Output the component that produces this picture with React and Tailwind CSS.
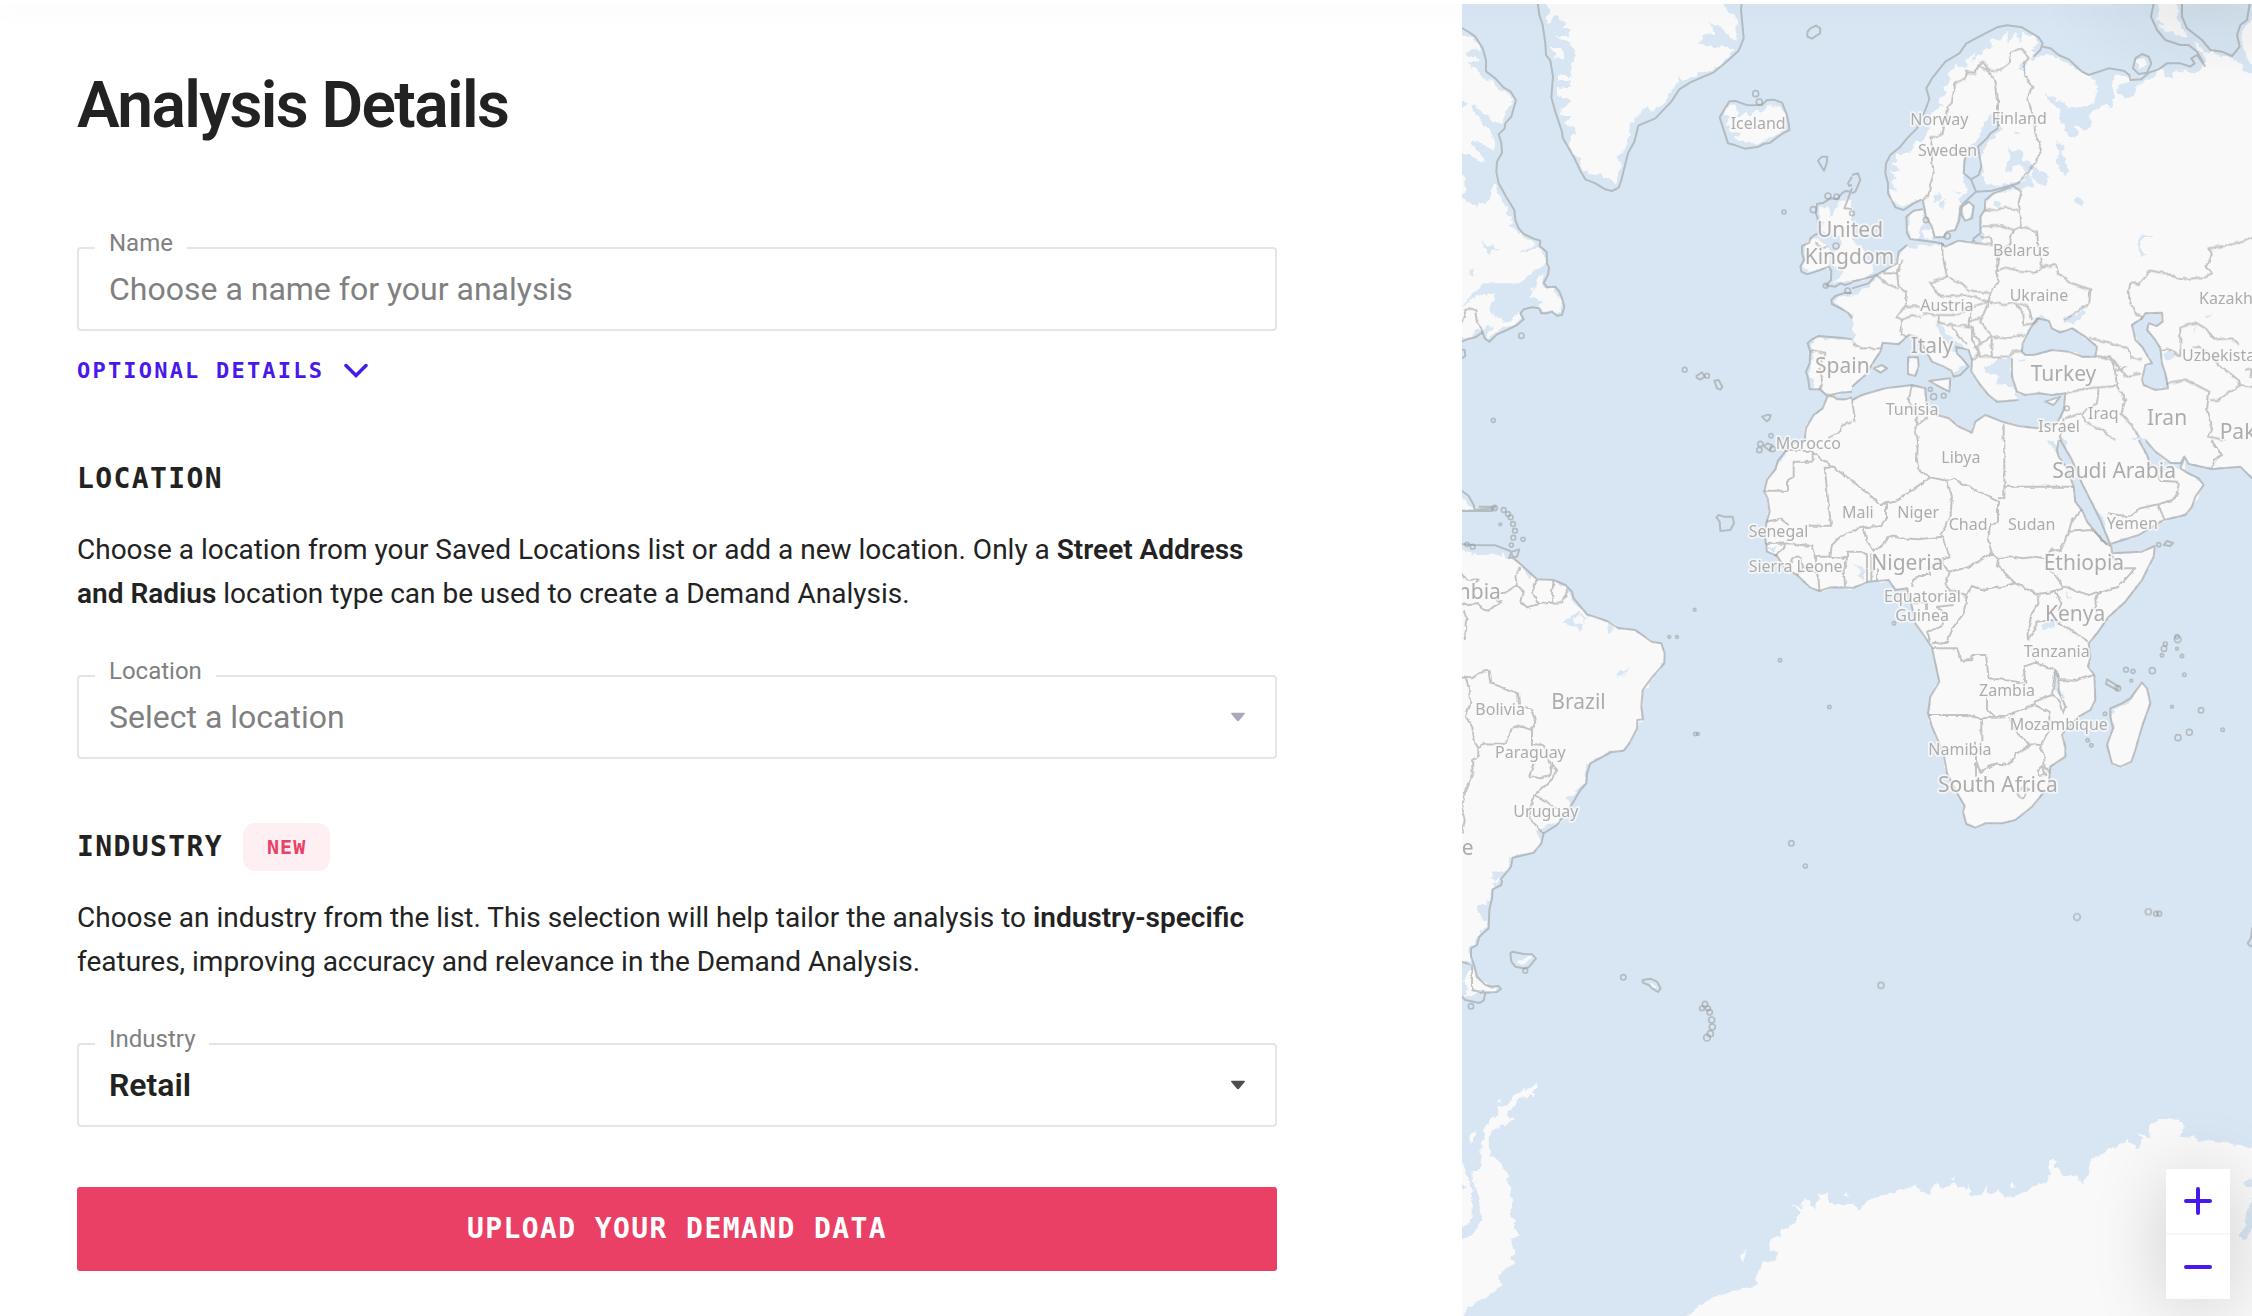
import React from "react";

const SANS = "font-[Roboto,'Liberation_Sans',sans-serif]";
const MONO = "font-['DejaVu_Sans_Mono','Liberation_Mono',monospace]";

const AFRICA_COAST =
  "M620 0L615 30L620 50L645 85L665 140L670 185L692 215L705 245L750 300L778 320L780 340L870 335L908 318L905 350L870 420L820 485L770 530L735 580L710 610L715 650L708 680L727 705L730 780L715 810L680 830L640 870L630 885L640 920L640 950L595 980L590 1040L540 1100L490 1140L450 1150L400 1150L370 1163L343 1152L333 1115L338 1098L310 1050L285 1000L275 940L240 860L228 820L235 770L262 725L250 670L240 622L215 585L190 550L180 500L165 445L130 450L110 420L50 425L0 445";

// Each tile covers 1200 x 1320 map units; "dx"/"dy" place it on the sheet.
const TILES = [
  {
    id: "north-atlantic",
    dx: 0,
    dy: 0,
    land: [
      "M0 90L30 105L55 112L75 128L88 148L60 150L38 160L60 165L78 180L62 186L50 192L72 205L85 225L110 245L115 235L130 248L140 265L160 275L180 290L182 315L165 325L160 345L148 368L125 365L100 340L75 330L70 308L58 322L70 345L90 365L108 385L122 400L132 430L124 455L105 440L85 430L60 420L55 430L80 455L102 488L75 478L50 462L30 458L0 450Z",
      "M0 520L30 525L42 530L35 550L42 570L30 580L0 585Z",
      "M0 596L30 596L50 605L75 622L85 610L105 608L118 590L120 560L128 548L138 560L135 585L150 590L148 605L165 625L162 640L180 650L182 665L172 680L190 685L200 700L220 708L212 715L240 722L255 738L225 745L200 762L228 752L262 745L280 765L282 795L240 820L220 835L205 850L95 850L80 865L55 890L30 920L0 925Z",
      "M0 940L30 925L60 895L90 882L125 880L132 895L118 910L112 925L125 945L150 965L180 962L200 935L205 950L200 965L175 980L150 985L120 1005L105 1020L100 1005L125 980L105 975L90 990L75 990L55 1010L30 1018L0 1025Z",
      "M278 818L270 840L285 865L310 862L308 880L325 890L328 910L325 940L312 940L305 925L290 932L272 935L262 925L268 905L245 890L232 892L235 875L250 860L255 835Z",
      "M285 0L290 45L285 70L300 72L305 50L318 45L325 65L345 62L333 80L358 88L350 108L310 108L345 125L365 145L370 180L358 200L358 230L320 222L322 240L355 240L358 260L315 265L316 290L345 292L358 300L330 330L325 345L355 345L342 370L370 390L372 405L360 410L350 435L365 460L385 480L395 510L410 522L445 517L455 530L480 540L492 555L498 530L505 500L500 470L518 440L535 400L532 375L555 350L575 330L590 315L600 335L640 305L665 265L680 245L680 225L695 240L760 215L800 200L840 155L850 145L790 142L765 138L735 125L755 120L750 98L790 105L785 82L768 68L800 75L825 100L835 118L850 122L858 70L850 45L830 35L805 0Z",
      "M295 140L320 142L340 160L335 178L305 175L312 160Z",
      "M820 330L840 312L855 320L860 350L880 335L900 345L915 325L930 340L950 310L970 325L985 318L1000 345L1003 375L980 400L940 420L920 430L880 430L845 415L870 400L840 395L822 375L835 350L815 345Z",
      "M1200 600L1165 602L1155 625L1138 650L1125 615L1105 625L1100 650L1118 670L1105 690L1130 700L1150 690L1160 700L1170 730L1150 750L1140 770L1150 800L1180 795L1175 815L1145 845L1200 845Z",
      "M1060 735L1080 715L1110 725L1130 740L1135 770L1130 800L1070 818L1050 800L1062 780L1055 755Z",
      "M1200 885L1165 890L1145 900L1160 920L1190 940L1200 950Z",
      "M1200 1018L1150 1020L1100 1012L1080 1025L1075 1040L1082 1060L1080 1100L1075 1130L1085 1145L1080 1165L1105 1165L1128 1182L1165 1180L1200 1170Z",
      "M1130 1187L1145 1190L1165 1200L1200 1200V1320H1062L1060 1290L1080 1250L1112 1225Z",
    ],
    lakes: [
      "M0 295L30 300L48 312L30 322L0 320Z",
      "M93 715L105 740L125 735L130 742L152 742L120 750L112 762L95 740Z",
      "M50 805L65 808L62 830L50 825Z",
    ],
    coast:
      "M0 70L30 84L50 96L70 110L92 145L102 180V214L130 235L155 263L175 274L192 300L178 350L160 370L158 385L140 403L148 430L150 458L135 485L133 515L140 550L165 595L187 630L190 660L200 685L215 702L245 716L265 722L263 738L284 756L285 790L291 803L288 825L275 848L285 862L310 860L322 875L330 895L337 920L330 945L315 947L300 935L285 940L268 940L262 925L240 922L215 928L205 940L215 958L195 975L165 990L135 1003L112 1025L98 1015L90 992M0 1035L30 1025L45 1018L70 1012L90 998M0 1045L38 1050L40 1068L30 1075M256 0L262 45L272 75L280 130L282 165L295 182L303 230L298 292L310 335L330 395L332 413L365 470L385 512L400 538L430 550L460 568L480 573L500 563L508 540L528 460L547 425L559 377L610 355L658 305L682 268L715 247L785 217L820 188L860 152L875 115L870 60L867 30L870 0M1075 85L1092 77L1105 85L1104 100L1080 116L1066 110V96ZM803 352L832 304L850 303L888 316L930 315L945 300L965 299L990 308L1003 340L1010 370L1012 390L998 397L985 405L955 428L935 432L920 440L878 446L845 434L828 430ZM1098 482L1110 470H1126L1124 490L1116 512ZM1200 530L1188 550L1192 558L1200 555M1200 575L1180 573L1170 580L1155 597L1135 595L1115 608L1095 612L1092 640L1097 655L1100 700L1088 705L1075 715L1072 728L1050 738V760L1056 780L1045 800L1048 815L1065 823L1105 810L1130 800L1138 812L1137 840L1122 856L1150 860L1165 850L1180 855L1200 848M1200 565L1177 625L1200 627M1200 880L1180 878L1150 888L1138 900L1140 912L1175 930L1190 940L1200 955M1200 1018L1165 1013L1100 1008L1080 1018L1067 1030L1075 1055L1073 1090L1062 1115L1068 1135L1073 1168H1103L1125 1187L1165 1178L1200 1175M1058 1320L1062 1285L1085 1245L1112 1225L1127 1188L1145 1190L1155 1198H1180L1200 1192M733 1128L750 1117L758 1130L745 1139L735 1134ZM787 1142L800 1140L811 1160L805 1169L795 1165ZM930 1250L948 1244L956 1246L952 1258L944 1264Z",
    border:
      "M0 990L30 965L40 935L52 925L70 930L73 955L85 980L92 998M1075 1055L1090 1053L1120 1058L1110 1075L1105 1110L1110 1140L1103 1168M1200 1265L1185 1268L1165 1285V1295L1130 1315M1090 730L1110 745L1130 740",
    islets: [[911, 281, 9], [922, 306, 9], [996, 636, 6], [1128, 588, 9], [1154, 590, 8], [1084, 629, 9], [1121, 857, 7], [1152, 738, 9], [1187, 872, 8], [208, 1007, 8], [698, 1109, 7], [765, 1127, 7], [124, 1261, 6], [957, 1307, 6]],
  },
  {
    id: "europe",
    dx: 1200,
    dy: 0,
    land: [
      "M0 725L30 740L40 770L60 800L65 815L40 838L0 840Z",
      "M0 890L50 860L75 830L100 815L130 790L150 755L165 740L200 750L190 735L240 740L245 735L275 740L330 720L360 730L395 735L390 700L388 670L390 645L405 635L400 600L420 585L480 570L510 565L530 560L545 555L500 545L440 557L400 550L395 515L385 490L395 450L430 405L450 385L435 365L420 340L405 355L390 380L380 410L365 430L345 445L335 490L335 540L345 575L320 600V640L310 680L285 700L250 712L240 680L222 650L215 600L190 600L165 620L140 618L118 600L112 570L135 575L118 545L135 535L112 512L150 515L118 490L140 485L130 465L175 455L195 430L215 415L235 385L232 350L250 330L272 320L258 300L285 280L275 265L300 240L285 225L310 195L345 205L335 180L370 160L360 185L395 150L420 140L415 115L445 125L465 95L470 130L490 100L500 130L515 95L545 110L558 130L535 150L555 160L530 180L600 165L640 185L690 215L730 240L735 275L725 310L690 325L650 320L620 300L580 280L600 310L625 330L620 355L640 385L650 410L670 415L680 400L665 375L700 390L718 375L712 350L730 325L752 312L780 325L790 290L782 265L788 225L840 232L830 245L800 255L798 275L820 295L845 290L850 265L880 240L905 230L930 205L940 230L950 225L960 235L965 220L1000 205L1020 220L1045 210L1060 190L1055 160L1080 155L1110 165L1150 180L1180 210L1230 235V1320H0Z",
      "M175 640L205 628L215 655L205 680L200 715L175 715L165 690Z",
      "M215 690L240 685V715H215Z",
      "M930 0H975L978 60L1010 115L970 105L920 80L935 72L910 60Z",
      "M1230 50L1200 55L1170 95L1175 140L1195 195L1230 205Z",
      "M1030 125L1058 150L1055 162L1038 150Z",
      "M855 185L872 172L885 190L875 205L855 208Z",
      "M330 622L350 608L362 618L355 650L340 658Z",
    ],
    lakes: [
      "M0 950L5 975L6 1020L0 1030Z",
      "M0 1160L40 1125L65 1085L85 1055L92 1028L140 1033L170 1005L195 1010L215 1040L240 1085L275 1100L298 1112L305 1130L325 1100L345 1100L330 1075L300 1050L270 1015L250 975L262 968L285 1000L320 1030L350 1050L360 1080L358 1115L385 1155L410 1185L435 1205L500 1200L480 1160L430 1150L440 1130L400 1120L395 1100L425 1090L440 1075L475 1080L480 1130L495 1175L520 1185L560 1180L600 1185L640 1180L635 1230L615 1270L555 1285L500 1278L450 1265L400 1245L370 1265L360 1298L320 1280L290 1255L255 1245L225 1230L220 1165L180 1160L100 1165L30 1185L0 1200Z",
      "M510 1055L512 1030L535 985L555 955L570 945L590 962L600 985L625 990L660 985L700 1010L735 1040L730 1070L690 1070L650 1055L600 1050L545 1065L520 1065Z",
      "M635 955L660 945L690 930L700 940L680 960L665 970L635 965Z",
      "M840 975L870 955L880 940L930 938L932 965L915 978L890 970L885 990L910 1020L925 1045L930 1090L940 1120L948 1165L910 1170L875 1155L870 1140L880 1095L900 1090L870 1040L850 1020Z",
      "M500 1080L525 1078L515 1085Z",
      "M1022 1000L1035 975L1030 998Z",
      "M932 1060L955 1045L965 1075L945 1085Z",
      "M1055 945L1080 942L1070 955Z",
      "M835 1320L860 1305L890 1320Z",
      "M485 392L508 398L492 406Z",
      "M468 445L485 452L500 448L515 460L512 480L540 490L545 500L525 520L505 500L490 492L480 500L475 520L462 512L465 485L475 470Z",
      "M540 505L548 498L570 515L592 530L585 558L565 558L540 530Z",
      "M512 540L530 520L548 560L525 555Z",
      "M612 420L632 440L625 460L640 470L642 490L652 515L640 525L625 510L612 480L622 465L618 450Z",
      "M665 600L680 585L696 608L688 622Z",
      "M868 705L905 705L875 715L862 740L880 762L864 768L857 735Z",
      "M245 590L262 578L270 592L262 605L248 602Z",
      "M262 610L285 595L268 630Z",
      "M305 573L332 575L320 582Z",
      "M495 205L515 185L525 190L510 208Z",
      "M425 605L445 610L440 628L425 622Z",
    ],
    isles: [
      "M168 1072H198L200 1100L190 1128L168 1122Z",
      "M232 1143L270 1138L295 1135L292 1175L262 1160Z",
      "M580 1205L625 1190L605 1215Z",
      "M588 972L610 957L655 970L630 990L605 988Z",
      "M66 1105L90 1095L105 1105L85 1118Z",
    ],
    coast:
      "M209 598L185 610L155 630L130 622L108 580V550L100 520L102 490L115 465L145 440L165 415L195 385L220 330L232 297L223 265L240 235L280 185L322 160L343 130L400 100L435 82L465 76L510 82L560 112L572 130L565 150L545 170M572 140L595 145L620 165L650 178L690 215L710 225L770 205L815 212L832 225L835 240L868 238L890 218L920 208L945 190L985 190L1015 200L1028 190L1018 175L1035 165L1060 200M907 0L897 50L915 90L940 120L985 135L1010 135L1035 155L1055 190M990 0V50L1005 85L1050 120L1075 150L1110 155L1140 168L1163 140L1155 105L1165 75L1185 60L1195 0M850 175L870 162L890 170L898 190L885 218L860 222L843 205ZM438 385L415 400L405 415L378 440L388 500L380 525L357 538L335 520L338 480L350 440M357 538L372 575L420 572L500 550M372 575L345 600L325 620L322 660L310 690L285 695L275 712L248 712L240 680L222 650L212 598M480 560L425 580L400 600L398 630L385 650V700L365 715L362 728L320 722L280 740L268 730L240 725L175 717L165 700L163 650L185 632L212 628M330 620L350 605L365 618L360 655L340 662L328 645ZM0 865L50 850L72 825L135 790L140 755L165 735M0 845L30 838L72 825M0 1160L40 1125L65 1085L85 1055L92 1028L140 1033L170 1005L195 1010L215 1040L240 1085L275 1100L298 1112L305 1130L325 1125L350 1100L330 1075L315 1060L312 1040L350 1050L360 1080L358 1115L385 1155L410 1185L435 1205L500 1200M480 1075V1130L495 1175L520 1185L560 1180L600 1185L640 1180L635 1230L615 1270L555 1285L500 1278L450 1265L400 1245L370 1265L360 1298L320 1280L290 1255L255 1245L225 1230L220 1165L180 1155L100 1165L30 1185L0 1200M510 1055L512 1030L535 985L555 955L590 962L600 985L625 998L660 985L700 1010L735 1040L730 1070L690 1070L650 1055L600 1050L545 1065L520 1065ZM840 975L870 955L880 940L930 938L932 965L915 978L890 970L885 990L910 1020L925 1045L930 1090L940 1120L948 1165L910 1170L875 1155L870 1140L880 1095L900 1090L870 1040L850 1020ZM168 1072H198L200 1100L190 1128L168 1122ZM232 1143L270 1138L295 1135L292 1175L262 1160ZM580 1205L625 1190L605 1215ZM66 1105L90 1095L105 1105L85 1118ZM0 525L18 520L25 540L10 575L0 580",
    border:
      "M228 590L215 598M228 590L235 555L245 520L240 480V440L235 415L268 405L272 385L282 350L285 320L300 305L310 250L340 235L345 215L370 222L380 195L395 182L405 205L430 215L450 205L470 190L475 155L505 145L520 160L530 175L515 190L518 225L542 260L527 292L545 355L550 400L570 452L550 485L500 550M380 195L410 215L430 240L438 300V385M480 558L510 575L500 605L510 680L485 690L450 678H390M400 632L440 628L460 620L500 635M365 728L420 735L418 715L385 708M485 690L470 735L435 760L440 790L432 815M510 680L555 695L560 745L570 800L612 795L618 820L660 850L715 868L712 910L670 940L635 960M432 812L460 803L500 812L550 818L570 800M432 815L440 845L415 880L410 905L460 915L490 908L515 945L512 975L545 970L560 955M490 908L530 920L540 960M270 730L272 770L285 830L235 848L260 885L290 890M285 830L330 850L350 870L415 880M290 890L350 885L410 905M152 780L135 815L140 860L165 880L160 918L200 920L210 935M72 825L100 845L140 870M90 820H135M160 918L135 950L150 960L180 945L205 950M150 960L148 1000L165 1012M210 940L260 945L320 945L360 920L410 905M262 945L258 968L300 975L360 980M300 980L320 1010L345 1035M360 920L350 965L365 1000L390 1030L420 1010L385 965L410 905M350 965L385 955M420 1010L460 1015L500 1005H520M420 1010L418 1045L420 1070H385L370 1040L390 1030M420 1070H470L485 1055H510M360 1080L380 1060M360 980V1020L380 1045M0 1030L30 1045H85M640 1180L700 1165L795 1158L785 1085L735 1068M715 1015L760 1025L830 1045L835 1070L870 1080M735 1068L775 1072L800 1100L825 1130L865 1120M775 1072L790 1110L825 1100M740 1165L735 1210L690 1240L640 1255M795 1158L820 1200L808 1240L850 1290L860 1310M690 1240L700 1265L750 1290L790 1320M635 1255L625 1320M180 1155L170 1200L195 1250L190 1290L198 1320M195 1275L228 1250M455 1270V1320M0 1200L10 1265M948 1150L1000 1138L1072 1175L1065 1230L1080 1290L1068 1310L1120 1320M1075 1200H1100L1135 1175L1165 1155L1230 1165M1165 1155L1160 1140L1100 1095L1080 1070L1040 1040L1020 1045M985 1070V982L1032 968L1060 985L1090 1018L1140 1015L1160 1035M930 1050L950 1045L985 1070M870 955L845 930L828 890L835 848L860 855L895 812L950 822L985 838L1060 832L1080 820L1060 800L1080 765L1072 745L1130 735L1230 705M1180 1110L1200 1105L1195 1130L1230 1135",
    islets: [[286, 708, 9], [222, 660, 8], [235, 1168, 6], [245, 1190, 9], [275, 1187, 7], [0, 640, 7], [645, 1225, 7]],
  },
  {
    id: "south-america",
    dx: 0,
    dy: 1320,
    land: [
      "M0 170L30 172L45 190L66 205L30 210L0 208Z",
      "M0 325L30 330L65 345L110 345L155 343L160 355L190 360L205 375L225 400L250 415L300 420L345 445L360 480L380 500L400 522L470 545L500 565L550 572L600 607L628 612L640 650L630 685L600 720L570 755L568 838L535 905L515 930L475 937L430 955L402 980L400 1030L360 1065L345 1075L355 1110L325 1150L275 1160L250 1175L268 1200L245 1235L175 1250L165 1245L172 1280L155 1300L120 1290L118 1320H0Z",
      "M1058 0L1030 5L1000 35L978 75L955 110L937 150L945 180L955 215L942 250L940 310L948 340L975 345L1000 385L1035 405L1070 440L1102 453L1150 442L1200 443V0Z",
    ],
    lakes: [
      "M330 550L355 535L375 512L380 525L405 530L385 572L370 558L345 552Z",
      "M495 718L500 700L533 680L515 700Z",
      "M465 580L470 555L488 570Z",
      "M945 325L975 318L965 340Z",
      "M228 400L240 412L230 418Z",
    ],
    isles: ["M362 535L380 528L400 535L392 555L370 552Z"],
    coast:
      "M0 310L60 315L130 316L175 333L185 355L205 372L255 418L305 420L340 435L360 455L365 475L405 523L465 543L498 564L550 570L600 606L628 610L638 640L637 670L600 712L572 750L568 800L573 838L556 840L555 865L532 910L515 932L478 936L415 970L405 1000L403 1030L385 1050L350 1110L315 1155L275 1180L268 1210L245 1238L182 1253L177 1280L145 1320M0 145L30 153L50 168L65 195L68 210L130 205M0 213H120L130 200H80M180 335L202 328L195 350L170 355ZM800 225L815 230H842L846 250L835 270L805 273L803 245L793 232ZM1058 0L1015 12L1000 35L978 62L970 88L945 120L937 155L947 175L953 215L943 250L940 300L945 335L975 348L1000 385L1035 405L1075 443L1102 453L1135 442L1200 443M935 18L947 10L961 16L953 32Z",
    border:
      "M205 378L190 410L195 435L160 458L140 460M195 435L215 455L208 485L225 502L260 492L240 455L255 420M260 492L305 488L300 460L305 422M305 488L330 487L350 445M0 400L30 405L50 420L80 418L65 440M0 495L80 490L90 508L110 512L145 485L130 475M35 510L45 545L38 600M0 710L60 715L90 695L113 692L118 730L160 745L198 760L202 800L235 805L248 835L240 870L205 858L175 868L162 912L100 910L80 925L70 910L60 860L42 830L55 790L50 740L42 715M240 870V912L275 915L282 940L300 975L312 990L310 1008L250 1065L240 1080L232 1135L275 1180M245 970L232 1008L265 1015L295 1005L300 975M250 1065L275 1080L320 1110L325 1140M80 925L78 950L60 960L62 1000L40 1050L30 1110L38 1140L30 1180M1000 33H1082V65H1025V110L1008 120V152H937M1082 38L1200 122M1148 83H1118L1135 240L1138 257H1070M943 245L985 236L1010 255M942 312L1030 310L1045 318L1080 315L1092 350H1135L1140 315L1165 290L1200 275M1092 350V390L1100 420L1102 453M1135 350L1185 355L1175 395L1180 440M1185 355V335H1200M970 345L998 320V308M1010 385L1020 355L1045 352L1050 380L1035 405M1050 380L1090 395",
    islets: [[145, 253, 4], [213, 298, 6], [128, 204, 8], [155, 210, 7], [168, 222, 7], [176, 232, 7], [183, 252, 7], [189, 272, 7], [184, 293, 7], [178, 315, 6], [45, 313, 6], [62, 320, 7], [728, 509, 4], [652, 591, 4], [675, 591, 4], [984, 661, 5], [1132, 801, 5], [730, 882, 5], [738, 882, 4], [1018, 1210, 8], [1060, 1278, 6], [925, 12, 8], [922, 30, 8], [962, 27, 8]],
  },
  {
    id: "africa",
    dx: 1200,
    dy: 1320,
    land: [
      AFRICA_COAST + "V0Z",
      "M640 0H860L890 60L915 95L940 95L985 85L998 50L1000 95L1050 130L1045 160L1020 200L1000 225L935 240L860 285L775 310L765 285L758 240L740 220L700 150L670 80L650 40Z",
      "M880 0H1230V125L1200 115L1165 80L1080 85L1010 72L998 50L960 75L920 50Z",
      "M870 728L885 745L895 790L870 860L850 930L838 965L805 980L780 970L765 915L783 865L778 830L785 808L815 795L835 790Z",
    ],
    lakes: [
      "M585 0H600L615 20L625 50L612 40Z",
      "M570 550L590 548L605 535V560L575 570Z",
      "M605 690L620 700V745L640 770L630 775L612 750Z",
      "M530 600L555 665L545 660Z",
      "M640 445L658 480L645 475Z",
      "M0 370L25 380L38 395L35 418L22 410L25 390Z",
      "M625 0L645 40L670 80L700 150L740 220L755 240L700 200L665 140L640 80L620 50Z",
    ],
    coast:
      AFRICA_COAST +
      "M625 0L660 60L690 130L720 190L745 240L765 290L775 312L860 285L935 240L1000 225L1020 200L1030 170L1055 135L1040 115L1005 98L985 85L998 50L1010 72L1080 87L1165 80L1200 115L1230 125M860 0L885 45L895 75L935 95M880 0L910 35L955 68L985 70L998 50M870 728L885 745L895 790L870 860L850 930L838 965L805 980L780 970L765 915L783 865L775 830V805L810 790L835 775ZM765 718L800 740L795 750L762 732ZM935 315L945 303L963 309L955 318Z",
    border:
      "M198 0L195 60L200 90L235 112L285 122L303 115L438 185V250L415 252L408 300L420 340L350 382L290 395L265 360L295 352L270 290L200 298L150 295L110 288L90 320L60 330L45 305L35 265M285 122L300 170L295 235L265 285M235 112L130 185L85 192L0 122M102 190V240L88 258L35 262L0 270M457 0V175H438M457 140H665M30 335L45 345V425M58 340V422M75 385V420M0 335H30M420 340L440 355L475 348L510 355L550 350L580 355L600 325L625 335L650 275L720 270L750 300L765 315M650 275L660 240L690 210M440 355L435 375L490 430L555 462L610 455L635 440L605 400L590 385M490 430L460 438L400 450L360 438L345 465L335 520L305 560L285 605L240 610M290 395L280 430L290 450L345 465M180 440L185 415L210 405H235L230 385L265 360M185 490H222V510M305 495L255 500L280 520L270 560L225 575L235 605M240 625H315L328 662L360 660L362 645H402L410 715L460 720L520 730L515 680L550 668L610 690L600 765L548 785V795L490 815L460 830L430 832L405 808V770M228 825H345L385 835L460 832M388 840V905M372 905V1010M372 960L385 998L430 970L470 975L495 940L535 913L565 915L595 870L590 815L548 795M470 835L495 880L535 913M565 915L577 950V980L595 1000M557 990L570 978L580 1005L562 1008ZM495 1060L515 1040L530 1050L510 1075ZM555 462L560 490L540 520L530 560V600L550 570V545L605 540L710 605M610 455L628 490L620 510M635 440L710 465L760 450L800 440L850 385L810 385L770 340M745 455L730 480L735 525M610 690L622 720L670 722L725 705M600 765L620 780L632 820L640 800L620 755V700M765 220L835 230L865 205L918 193L970 178L980 150L975 125L925 122L910 95M918 193L937 238M1080 85L1088 60L1110 45L1085 15L1080 0",
    islets: [[977, 598, 10], [975, 590, 6], [975, 626, 4], [990, 648, 5], [930, 646, 5], [940, 612, 6], [936, 626, 8], [822, 689, 7], [843, 694, 6], [901, 692, 9], [838, 722, 4], [997, 704, 5], [798, 745, 8], [960, 800, 4], [1047, 811, 8], [1112, 869, 5], [1012, 877, 9], [978, 893, 9], [759, 821, 5], [707, 901, 5], [718, 916, 5], [126, 550, 5], [920, 314, 6]],
  },
  {
    id: "south-atlantic",
    dx: 0,
    dy: 2640,
    land: [
      "M0 0H145L120 28L118 65Q75 68 78 95Q85 118 110 122L105 140L80 165L70 190L50 200L55 240L30 245L0 242Z",
      "M62 260L75 300L110 320L140 322L120 335L95 330L60 345L35 345L50 330L35 300L55 270Z",
      "M190 250L210 235L240 232L225 250Z",
      "M590 308L605 312L618 325L605 322Z",
      "M250 610L258 620L225 650L200 655L175 685L165 710L190 718L160 735L140 735L120 760L110 775L112 830L145 845L165 880L172 925L185 965L172 1005L190 1020L185 1045L203 1065L175 1075L190 1110L175 1135L188 1150L150 1175L135 1205L150 1215L100 1255L50 1280L30 1308L0 1330V1085L30 1080L60 1065L88 1020L78 950L62 900V873L85 870L90 790L98 748L110 725L138 705L140 685L165 680L190 645Z",
      "M0 820L30 850L50 890L63 940L62 1005L45 1035L30 1042L0 1045Z",
      "M72 748L65 780L52 795L55 770Z",
      "M135 665L150 652L153 666Z",
      "M232 640L250 640L245 652Z",
      "M690 1330L713 1308L740 1280L790 1250L840 1235L880 1225L915 1215L912 1190L932 1145L965 1147L980 1115L955 1115L950 1090L970 1068L990 1070V1050L1035 1030L1043 995L1020 970L1045 985L1060 952L1078 975L1090 990L1100 945L1132 940L1125 972H1200V1330Z",
      "M862 1127L878 1103V1150Z",
      "M1175 940H1187L1191 955Z",
    ],
    lakes: ["M0 905L42 920L30 925L0 922Z", "M120 5L135 8L130 20Z"],
    coast:
      "M150 0L148 15L122 28L120 55L112 90L110 145L82 170L75 195L57 205V230L67 258L75 290L100 315L120 320L140 318L147 327L135 336L100 338L95 362L82 369L40 360L30 350L0 345M175 220L182 215L215 222L240 223L252 235L230 262L215 265L190 260L178 245ZM572 300L595 296L615 305L626 325L618 336L600 325L590 315L572 308Z",
    border: "M60 260V330L100 338M0 243L30 246L66 257",
    islets: [[57, 379, 8], [220, 272, 7], [514, 292, 8], [759, 372, 8], [750, 385, 7], [768, 385, 7], [773, 397, 8], [779, 420, 9], [781, 441, 9], [775, 461, 9], [765, 473, 10]],
  },
  {
    id: "antarctica",
    dx: 1200,
    dy: 2640,
    land: [
      "M0 973L12 970L20 992L40 970L60 955L130 935L165 925L190 915L210 935L228 942L250 910L262 920L300 918L308 910L345 930L352 912L357 950L390 948L402 916L410 940L425 942L440 925L450 950L480 956L500 945L540 920L585 905L595 890L588 850L595 840L612 840L608 860L620 865L635 887L675 890L695 912L712 870L715 845L765 810L800 795L820 790L825 775L835 785L850 795L858 805L870 775L860 762L893 770L890 740L920 720L950 714L980 722L1003 745L990 745L992 760L985 772L1025 768L1045 785L1065 780L1100 790L1115 785L1230 808V1330H0Z",
      "M298 895L312 887L302 902Z",
      "M474 915L482 906L486 920L478 922Z",
    ],
    lakes: [
      "M1177 915L1192 895L1230 900V925L1190 922Z",
      "M1230 930L1200 960L1185 990L1175 1040L1165 1072L1180 1080L1195 1060L1200 1035L1230 1000Z",
    ],
    coast: "M1230 140L1200 145L1197 175L1187 190L1195 198L1230 195",
    border: "",
    islets: [[87, 316, 9], [675, 111, 10], [889, 95, 9], [912, 101, 7], [922, 101, 7]],
  },
];

const SMALL_LABELS = [
  ["Iceland", 836, 388],
  ["Norway", 1375, 374],
  ["Finland", 1619, 371],
  ["Sweden", 1398, 467],
  ["Belarus", 1623, 768],
  ["Ukraine", 1673, 902],
  ["Austria", 1405, 932],
  ["Kazakhstan", 2241, 911],
  ["Uzbekistan", 2190, 1082],
  ["Tunisia", 1301, 1246],
  ["Iraq", 1908, 1258],
  ["Israel", 1759, 1296],
  ["Morocco", 971, 1346],
  ["Mali", 1170, 1555],
  ["Senegal", 890, 1611],
  ["Sierra Leone", 890, 1717],
  ["Bolivia", 70, 2145],
  ["Paraguay", 129, 2275],
  ["Uruguay", 184, 2451],
  ["Libya", 1468, 1390],
  ["Niger", 1336, 1555],
  ["Chad", 1490, 1591],
  ["Sudan", 1668, 1591],
  ["Yemen", 1964, 1587],
  ["Equatorial", 1296, 1805],
  ["Guinea", 1330, 1863],
  ["Tanzania", 1715, 1970],
  ["Zambia", 1581, 2088],
  ["Mozambique", 1673, 2190],
  ["Namibia", 1429, 2266],
];

const LARGE_LABELS = [
  ["United", 1095, 712],
  ["Kingdom", 1058, 793],
  ["Spain", 1089, 1120],
  ["Italy", 1376, 1060],
  ["Turkey", 1736, 1142],
  ["Iran", 2085, 1275],
  ["Pakistan", 2303, 1317],
  ["Colombia", -135, 1796],
  ["Brazil", 298, 2128],
  ["Chile", -82, 2565],
  ["Saudi Arabia", 1801, 1435],
  ["Nigeria", 1258, 1711],
  ["Ethiopia", 1775, 1709],
  ["Kenya", 1779, 1864],
  ["South Africa", 1458, 2376],
];

function WorldMap() {
  return (
    <svg
      className="block h-full w-full bg-[#d8e6f3]"
      viewBox="30 12 2370 3936"
      preserveAspectRatio="xMinYMin slice"
      role="img"
      aria-label="World map"
    >
      <defs>
        <filter id="rough-coast" filterUnits="userSpaceOnUse" x="0" y="0" width="2430" height="3970">
          <feTurbulence type="fractalNoise" baseFrequency="0.045" numOctaves="3" seed="4" />
          <feDisplacementMap in="SourceGraphic" scale="20" xChannelSelector="R" yChannelSelector="G" />
        </filter>
        <filter id="rough-border" filterUnits="userSpaceOnUse" x="0" y="0" width="2430" height="3970">
          <feTurbulence type="fractalNoise" baseFrequency="0.05" numOctaves="2" seed="9" />
          <feDisplacementMap in="SourceGraphic" scale="12" xChannelSelector="R" yChannelSelector="G" />
        </filter>
      </defs>
      <g filter="url(#rough-coast)">
        {TILES.map((t) => (
          <g key={t.id} transform={`translate(${t.dx} ${t.dy})`}>
            <path className="fill-[#f9f9f9]" d={t.land.join("")} />
            <path className="fill-[#d8e6f3]" d={t.lakes.join("")} />
            {t.isles && <path className="fill-[#f9f9f9]" d={t.isles.join("")} />}
          </g>
        ))}
      </g>
      <g className="fill-none stroke-[#989898]/55" strokeWidth="6" strokeLinejoin="round">
        {TILES.map((t) => (
          <g key={t.id} transform={`translate(${t.dx} ${t.dy})`}>
            <path d={t.coast} />
            {t.islets.map(([x, y, r]) => (
              <circle key={`${x}-${y}`} cx={x} cy={y} r={r} strokeWidth="5" />
            ))}
          </g>
        ))}
      </g>
      <g className="fill-none stroke-[#989898]/55" strokeWidth="6" strokeLinejoin="round" filter="url(#rough-border)">
        {TILES.map((t) => (
          <path key={t.id} transform={`translate(${t.dx} ${t.dy})`} d={t.border} />
        ))}
      </g>
      <g
        className="fill-[#acacac] stroke-[#f9f9f9]/80 font-['Noto_Sans',sans-serif] [paint-order:stroke]"
        strokeWidth="11"
        strokeLinejoin="round"
      >
        <g className="text-[48px]">
          {SMALL_LABELS.map(([name, x, y]) => (
            <text key={name} x={x} y={y}>{name}</text>
          ))}
        </g>
        <g className="text-[63px]">
          {LARGE_LABELS.map(([name, x, y]) => (
            <text key={name} x={x} y={y}>{name}</text>
          ))}
        </g>
      </g>
    </svg>
  );
}

function Field({ id, label, children }) {
  return (
    <div className="relative rounded-[4px] border-2 border-[#e5e5e5]">
      <label htmlFor={id} className="absolute -top-[18px] left-4 bg-white px-3.5 text-[24px] leading-6 text-[#808080]">
        {label}
      </label>
      {children}
    </div>
  );
}

function Caret({ className }) {
  return (
    <svg
      className={`pointer-events-none absolute top-1/2 right-[30px] h-[9px] w-[14px] -translate-y-1/2 ${className}`}
      viewBox="0 0 14 9"
      aria-hidden="true"
    >
      <path d="M1 0H13Q14.500 .5 13.500 1.800L8 8.200Q7 9.300 6 8.200L.5 1.800Q-.5 .5 1 0Z" fill="currentColor" />
    </svg>
  );
}

function SectionHeading({ children }) {
  return <h2 className={`${MONO} text-[28px] leading-[48px] font-bold tracking-wider uppercase`}>{children}</h2>;
}

export default function App() {
  return (
    <div className={`${SANS} flex min-h-screen flex-col overflow-hidden bg-white text-[#222222]`}>
      <header className="relative z-10 h-1 bg-white shadow-[0_4px_28px_rgba(0,0,0,0.09)]" />
      <main className="grid flex-1 grid-cols-[1462fr_790fr]">
        <form className="pt-[62px] pb-[45px] pl-[77px]" onSubmit={(e) => e.preventDefault()}>
          <div className="flex w-full max-w-[1200px] flex-col">
            <h1 className="text-[64px] leading-[80px] font-semibold tracking-tight">Analysis Details</h1>

            <div className="mt-[101px]">
              <Field id="name" label="Name">
                <input
                  id="name"
                  type="text"
                  placeholder="Choose a name for your analysis"
                  className="block h-20 w-full bg-transparent px-[30px] text-[32px] outline-none placeholder:text-[#808080]"
                />
              </Field>
            </div>

            <button
              type="button"
              className={`${MONO} mt-6 flex items-center gap-5 self-start text-[22px] leading-8 font-bold tracking-widest text-[#4719ea]`}
            >
              OPTIONAL DETAILS
              <svg className="h-4 w-6" viewBox="0 0 24 16" fill="none" stroke="currentColor" strokeWidth="3.500" strokeLinecap="round" aria-hidden="true">
                <path d="M2 2.500L12 12.500L22 2.500" />
              </svg>
            </button>

            <section className="mt-[68px]">
              <SectionHeading>Location</SectionHeading>
              <p className="mt-[25px] mb-[59px] text-[28px] leading-[44px]">
                Choose a location from your Saved Locations list or add a new location. Only a{" "}
                <strong className="font-semibold">
                  Street Address
                  <br />
                  and Radius
                </strong>{" "}
                location type can be used to create a Demand Analysis.
              </p>
              <Field id="location" label="Location">
                <select
                  id="location"
                  defaultValue=""
                  className="block h-20 w-full appearance-none bg-transparent px-[30px] text-[32px] text-[#808080] outline-none"
                >
                  <option value="">Select a location</option>
                </select>
                <Caret className="text-[#a9a8bd]" />
              </Field>
            </section>

            <section className="mt-16">
              <div className="flex items-center gap-5">
                <SectionHeading>Industry</SectionHeading>
                <span className={`${MONO} rounded-xl bg-[#fdeff2] px-6 text-[20px] leading-[48px] font-bold tracking-wider text-[#eb4066]`}>
                  NEW
                </span>
              </div>
              <p className="mt-[25px] mb-[59px] text-[28px] leading-[44px]">
                Choose an industry from the list. This selection will help tailor the analysis to{" "}
                <strong className="font-semibold">industry-specific</strong>
                <br />
                features, improving accuracy and relevance in the Demand Analysis.
              </p>
              <Field id="industry" label="Industry">
                <select
                  id="industry"
                  defaultValue="retail"
                  className="block h-20 w-full appearance-none bg-transparent px-[30px] text-[32px] font-semibold outline-none"
                >
                  <option value="retail">Retail</option>
                </select>
                <Caret className="text-[#4d4d4d]" />
              </Field>
            </section>

            <button
              type="submit"
              className={`${MONO} mt-15 h-[84px] w-full rounded-[3px] bg-[#eb4066] text-[28px] font-bold tracking-wider text-white`}
            >
              UPLOAD YOUR DEMAND DATA
            </button>
          </div>
        </form>

        <div className="relative overflow-hidden">
          <WorldMap />
          <div className="pointer-events-none absolute top-0 right-0 h-20 w-52 bg-[radial-gradient(ellipse_at_80%_0%,rgba(0,0,0,0.05),transparent_70%)]" />
          <div className="absolute right-[22px] bottom-[17px] flex w-16 flex-col divide-y-2 divide-[#f7f7f7] bg-white text-[#4719ea] shadow-[0_8px_72px_rgba(0,0,0,0.18)]">
            <button type="button" aria-label="Zoom in" className="flex h-[66px] items-center justify-center">
              <svg className="h-7 w-7" viewBox="0 0 28 28" stroke="currentColor" strokeWidth="4" strokeLinecap="round" aria-hidden="true">
                <path d="M14 2V26M2 14H26" />
              </svg>
            </button>
            <button type="button" aria-label="Zoom out" className="flex h-16 items-center justify-center">
              <svg className="h-7 w-7" viewBox="0 0 28 28" stroke="currentColor" strokeWidth="4" strokeLinecap="round" aria-hidden="true">
                <path d="M2 14H26" />
              </svg>
            </button>
          </div>
        </div>
      </main>
    </div>
  );
}
